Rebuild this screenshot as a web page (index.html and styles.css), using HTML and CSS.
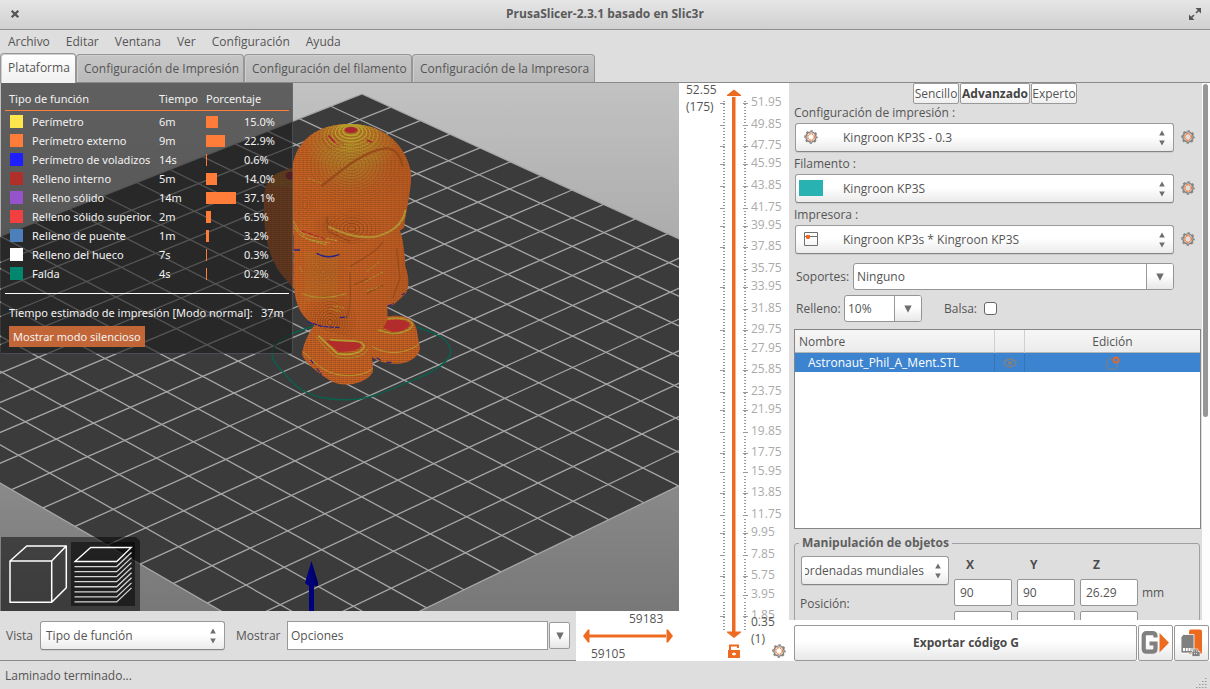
FILE: index.html
```
<!DOCTYPE html>
<html lang="es">
<head>
<meta charset="utf-8">
<title>PrusaSlicer-2.3.1 basado en Slic3r</title>
<link rel="stylesheet" href="styles.css">
</head>
<body>
<svg class="defs" width="0" height="0">
  <defs>
    <symbol id="gear" viewBox="0 0 14 14">
      <circle cx="7" cy="7" r="5.1" fill="none" stroke="#808080" stroke-width="1.4"/>
      <circle cx="7" cy="7" r="6.1" fill="none" stroke="#808080" stroke-width="1.4" stroke-dasharray="2.4 2.39" stroke-dashoffset="1.2"/>
      <circle cx="7" cy="7" r="3.3" fill="none" stroke="#ed6b21" stroke-width="1.2" stroke-dasharray="1.9 .7"/>
    </symbol>
    <symbol id="updown" viewBox="0 0 6 16">
      <path d="M3 0.5L5.8 5.5H.2zM3 15.5L5.8 10.5H.2z" fill="#6e6e6e"/>
    </symbol>
    <symbol id="down" viewBox="0 0 8 8">
      <path d="M.3.5H7.7L4 7.7z" fill="#6e6e6e"/>
    </symbol>
  </defs>
</svg>
<div class="window">
  <header class="titlebar">
    <svg class="close" width="10" height="10" viewBox="0 0 10 10"><path d="M1.7 1.7L8.3 8.3M8.3 1.7L1.7 8.3" stroke="#555" stroke-width="2.3"/></svg>
    <span class="title">PrusaSlicer-2.3.1 basado en Slic3r</span>
    <svg class="max" width="12" height="12" viewBox="0 0 12 12"><path d="M6.5 0H12V5.5zM0 6.5V12H5.5z" fill="#555"/><path d="M2 10L5 7M7 5L10 2" stroke="#555" stroke-width="1.6"/></svg>
  </header>
  <nav class="menubar"><span>Archivo</span><span>Editar</span><span>Ventana</span><span>Ver</span><span>Configuración</span><span>Ayuda</span></nav>
  <div class="tabs">
    <div class="tab active">Plataforma</div>
    <div class="tab t2">Configuración de Impresión</div>
    <div class="tab t3">Configuración del filamento</div>
    <div class="tab t4">Configuración de la Impresora</div>
  </div>

  <main class="main">
    <section class="plater">
      <div class="view3d">
        <svg class="scene" width="679" height="528" viewBox="0 83 679 528">
          <defs>
            <linearGradient id="sky" x1="0" y1="0" x2="0" y2="1"><stop offset="0" stop-color="#c2c2c2"/><stop offset="1" stop-color="#787878"/></linearGradient>
            <pattern id="layers" width="12" height="6" patternUnits="userSpaceOnUse">
              <rect width="12" height="3" fill="#c96326"/><rect y="3" width="12" height="3" fill="#a3501f"/>
              <rect x="3" width="3" height="3" fill="#b95b22"/><rect x="6" y="3" width="3" height="3" fill="#b25822"/>
            </pattern>
            <linearGradient id="shade" x1="0" y1="0" x2="1" y2="0"><stop offset="0" stop-color="#c9621f" stop-opacity=".3"/><stop offset=".45" stop-color="#b85a20" stop-opacity=".1"/><stop offset="1" stop-color="#a5501c" stop-opacity=".45"/></linearGradient>
            <radialGradient id="crown" gradientUnits="userSpaceOnUse" cx="303" cy="190" r="135"><stop offset="0" stop-color="#a8a12c" stop-opacity=".5"/><stop offset=".6" stop-color="#a8902c" stop-opacity=".3"/><stop offset="1" stop-color="#a8802c" stop-opacity="0"/></radialGradient>
            <clipPath id="head"><path d="M128 240C142 165 200 116 305 116C410 120 470 185 484 268C482 330 468 375 462 428L430 450L300 480L128 450z"/></clipPath>
            <clipPath id="trunk"><path d="M131 400L300 420L447 430C458 455 464 500 466 545C478 580 478 600 468 625L430 660L412 664V705L360 750L331 770L200 725C160 700 136 670 132 600z"/></clipPath>
          </defs>
          <rect y="83" width="679" height="528" fill="url(#sky)"/>
          <g id="bed"></g>
          <g transform="translate(250 85) scale(.33333)">
            <path d="M195 722C130 742 66 764 66 806C66 832 90 850 120 884C165 936 230 944 290 944C370 944 420 912 480 889C545 864 603 830 602 797C600 762 550 742 500 726" fill="none" stroke="#0b5f4d" stroke-width="4.5"/>
            <path d="M128 248L90 260C60 272 44 300 42 335C40 430 48 500 88 560L132 612z" fill="url(#layers)"/>
            <path d="M128 250L80 268L60 300L128 310z" fill="#a8902c" opacity=".3"/>
            <ellipse cx="122" cy="272" rx="16" ry="12" fill="#9b2430"/>
            <!-- boots -->
            <path d="M330 735C345 705 400 692 440 692C480 694 496 710 500 735L510 790C508 812 480 838 440 836C410 836 380 828 365 815z" fill="url(#layers)"/>
            <path d="M400 728L412 706C450 700 484 708 478 722C462 740 440 742 425 740z" fill="#b22c2c"/>
            <path d="M385 735L425 746C450 746 484 738 488 718C480 700 440 696 412 702" fill="none" stroke="#a89a30" stroke-width="4"/>
            <path d="M368 785C410 812 470 806 506 778" fill="none" stroke="#b3982c" stroke-width="3"/>
            <path d="M195 718C175 745 158 780 156 808C162 830 200 865 250 892C290 908 350 895 368 862C372 820 358 775 335 755L300 740z" fill="url(#layers)"/>
            <path d="M228 768L250 765C290 770 322 764 334 778C332 796 300 802 265 800z" fill="#b22c2c"/>
            <path d="M240 764C300 772 330 760 343 782C338 806 300 812 262 806L205 752" fill="none" stroke="#b09d30" stroke-width="5"/>
            <path d="M198 755C222 780 235 806 262 816C300 824 345 816 354 790" fill="none" stroke="#a88d2c" stroke-width="3"/>
            <path d="M158 800C200 835 215 860 270 870C310 876 350 868 368 850" fill="none" stroke="#b3982c" stroke-width="3"/>
            <!-- trunk -->
            <g clip-path="url(#trunk)">
              <rect x="120" y="390" width="370" height="390" fill="url(#layers)"/>
              <rect x="120" y="390" width="370" height="390" fill="url(#shade)"/>
              <rect x="165" y="500" width="100" height="150" fill="#a8902c" opacity=".15"/>
              <g id="trunkRings"></g>
              <path d="M300 560C300 620 306 660 290 700M440 490L450 580L428 640M300 545C340 520 380 500 400 470M350 625L400 600M310 600L355 580" fill="none" stroke="#8d4719" stroke-width="4" opacity=".7"/>
              <path d="M148 545L158 562M350 560L390 530M345 590L400 560M350 618L390 605" stroke="#a88c2c" stroke-width="3" fill="none" stroke-dasharray="9 4"/>
              <path d="M155 625C200 645 250 638 290 625" stroke="#a9952c" stroke-width="3" fill="none"/>
              <path d="M250 662L285 670M240 672L270 680" stroke="#a9952c" stroke-width="3" fill="none" stroke-dasharray="6 3"/>
              <path d="M200 505C225 520 250 516 268 508M132 495H150" stroke="#26208a" stroke-width="4" fill="none"/>
            </g>
            <path d="M172 710L215 724L270 728M270 698L290 696M412 664L432 656M455 630L465 625M182 824L190 836M200 850L214 868M380 818L392 826M410 832L425 832" stroke="#28228a" stroke-width="3.5" fill="none" stroke-dasharray="14 3"/>
            <!-- helmet -->
            <g clip-path="url(#head)">
              <rect x="120" y="110" width="370" height="370" fill="url(#layers)"/>
              <rect x="120" y="110" width="370" height="370" fill="url(#shade)"/>
              <rect x="120" y="110" width="370" height="370" fill="url(#crown)"/>
              <g id="headRings"></g>
            </g>
            <path d="M214 303C265 265 335 200 405 190C440 188 452 215 458 245" fill="none" stroke="#984b1a" stroke-width="7"/>
            <path d="M175 280L215 295" fill="none" stroke="#a88c2c" stroke-width="3" stroke-dasharray="9 3"/>
            <path d="M235 425C280 445 320 462 375 455C420 445 460 420 466 375" fill="none" stroke="#a89a35" stroke-width="6"/>
            <path d="M235 425C280 445 320 462 375 455C420 445 460 420 466 375" fill="none" stroke="#c77a2b" stroke-width="2"/>
            <path d="M130 408L145 435C185 465 220 455 262 468M132 425L150 450C180 470 210 468 240 474M150 438L170 462L230 480" fill="none" stroke="#aca035" stroke-width="3" stroke-dasharray="9 3"/>
            <path d="M155 438L225 462" stroke="#b22c2c" stroke-width="4" stroke-dasharray="16 4"/>
            <path d="M232 395V435M235 440L300 470" stroke="#934819" stroke-width="4" fill="none"/>
          </g>
          <path d="M311.5 561L305 583C308 587 315 587 318 583z" fill="#00007c"/>
          <path d="M311.500 563L315 586H318L318 583z" fill="#00005e"/>
          <rect x="309" y="585" width="5" height="26" fill="#00007c"/>
        </svg>

        <div class="legend">
          <div class="lrow lhead"><span class="c1">Tipo de función</span><span class="c2">Tiempo</span><span class="c3">Porcentaje</span></div>
          <div class="lrow"><i class="sw yellow"></i><span class="name">Perímetro</span><span class="time">6m</span><span class="barbox"><i class="bar" style="width:12px"></i></span><span>15.0%</span></div>
          <div class="lrow"><i class="sw orange"></i><span class="name">Perímetro externo</span><span class="time">9m</span><span class="barbox"><i class="bar" style="width:19px"></i></span><span>22.9%</span></div>
          <div class="lrow"><i class="sw blue"></i><span class="name">Perímetro de voladizos</span><span class="time">14s</span><span class="barbox"><i class="bar" style="width:1px"></i></span><span>0.6%</span></div>
          <div class="lrow"><i class="sw brick"></i><span class="name">Relleno interno</span><span class="time">5m</span><span class="barbox"><i class="bar" style="width:11px"></i></span><span>14.0%</span></div>
          <div class="lrow"><i class="sw purple"></i><span class="name">Relleno sólido</span><span class="time">14m</span><span class="barbox"><i class="bar" style="width:30px"></i></span><span>37.1%</span></div>
          <div class="lrow"><i class="sw red"></i><span class="name">Relleno sólido superior</span><span class="time">2m</span><span class="barbox"><i class="bar" style="width:5px"></i></span><span>6.5%</span></div>
          <div class="lrow"><i class="sw steel"></i><span class="name">Relleno de puente</span><span class="time">1m</span><span class="barbox"><i class="bar" style="width:3px"></i></span><span>3.2%</span></div>
          <div class="lrow"><i class="sw white"></i><span class="name">Relleno del hueco</span><span class="time">7s</span><span class="barbox"><i class="bar" style="width:1px"></i></span><span>0.3%</span></div>
          <div class="lrow"><i class="sw green"></i><span class="name">Falda</span><span class="time">4s</span><span class="barbox"><i class="bar" style="width:1px"></i></span><span>0.2%</span></div>
          <div class="total"><span class="est">Tiempo estimado de impresión [Modo normal]:</span><span>37m</span></div>
          <div class="silent">Mostrar modo silencioso</div>
        </div>

        <svg class="viewicons" width="139" height="74" viewBox="1 537 139 74">
          <path d="M1 537H136L140 541V611H1z" fill="#000" fill-opacity=".5"/>
          <rect x="71" y="542" width="64" height="64" fill="#000" fill-opacity=".48"/>
          <path d="M10 561H51.700V602.300H10zM10 561L26.700 546H66.300L51.700 561M66.300 546V587.700L51.700 602.300" fill="none" stroke="#fff" stroke-width="1.500" stroke-linejoin="round"/>
          <path d="M75 561.500L90.700 547.500H131.300L116.700 561.500z" fill="none" stroke="#fff" stroke-width="1.300"/>
          <g id="stack" fill="none" stroke="#d4d4d4" stroke-width="1.300"></g>
        </svg>
      </div>

      <div class="viewbar">
        <span class="vlabel">Vista</span>
        <div class="choice vchoice"><span>Tipo de función</span><svg width="6" height="16"><use href="#updown"/></svg></div>
        <span class="mlabel">Mostrar</span>
        <div class="entry">Opciones</div>
        <div class="dropbtn"><svg width="8" height="8"><use href="#down"/></svg></div>
      </div>

      <div class="hslider">
        <span class="hi">59183</span>
        <svg width="90" height="14" viewBox="0 0 90 14"><rect x="6" y="5.500" width="77" height="3" fill="#ed6b21"/><path d="M0 7L5 0.500H6.500V13.500H5zM90 7L85 .5H83.500V13.500H85z" fill="#ed6b21"/></svg>
        <span class="lo">59105</span>
      </div>

      <div class="vslider">
        <svg width="110" height="578" viewBox="679 83 110 578">
          <g id="ticks" fill="#999"></g>
          <g id="tickLabels" class="ticklabels"></g>
          <rect x="732" y="97" width="3" height="536" fill="#ed6b21"/><rect x="735" y="97" width="1" height="536" fill="#f8b48e"/>
          <path d="M727 96V95L734 89.500L741 95V96zM727 631.500V632.500L734 638L741 632.500V631.500z" fill="#ed6b21"/>
          <g class="curlabels"><text x="686" y="94">52.55</text><text x="686" y="111">(175)</text><text x="751" y="626">0.35</text><text x="751" y="643">(1)</text></g>
          <path d="M730 650.500V645.500H738V648" fill="none" stroke="#ed6b21" stroke-width="2"/>
          <rect x="728" y="650" width="12" height="8" fill="#ed6b21"/><path d="M732 654H736M734 652.500V655.500" stroke="#fff" stroke-width="1.300"/>
          <use href="#gear" x="772" y="644" width="14" height="14"/>
        </svg>
      </div>
    </section>

    <aside class="side">
      <div class="scrollarea">
        <div class="content">
          <div class="modes"><span>Sencillo</span><span class="on">Advanzado</span><span>Experto</span></div>
          <div class="plabel">Configuración de impresión :</div>
          <div class="prow"><div class="choice"><svg class="pic" width="14" height="14"><use href="#gear"/></svg><span class="val">Kingroon KP3S - 0.3</span><svg width="6" height="16"><use href="#updown"/></svg></div><svg class="edit" width="14" height="14"><use href="#gear"/></svg></div>
          <div class="plabel">Filamento :</div>
          <div class="prow"><div class="choice"><i class="filament"></i><span class="val">Kingroon KP3S</span><svg width="6" height="16"><use href="#updown"/></svg></div><svg class="edit" width="14" height="14"><use href="#gear"/></svg></div>
          <div class="plabel">Impresora :</div>
          <div class="prow"><div class="choice"><svg class="pic" width="14" height="14" viewBox="0 0 14 14"><path d="M.5.5H13.500V13.500H.5zM0 4.500H14" fill="none" stroke="#707070"/><path d="M2 3H6V6L5 7H3L2 6z" fill="#ed6b21"/></svg><span class="val">Kingroon KP3s * Kingroon KP3S</span><svg width="6" height="16"><use href="#updown"/></svg></div><svg class="edit" width="14" height="14"><use href="#gear"/></svg></div>
          <div class="frow r1"><span class="flabel">Soportes:</span><div class="combo c1w"><span>Ninguno</span><b><svg width="8" height="8"><use href="#down"/></svg></b></div></div>
          <div class="frow r2"><span class="flabel">Relleno:</span><div class="combo c2w"><span>10%</span><b><svg width="8" height="8"><use href="#down"/></svg></b></div><span class="balsa">Balsa:</span><i class="check"></i></div>
          <div class="list">
            <div class="lh"><span>Nombre</span><span></span><span class="ctr">Edición</span></div>
            <div class="li"><span>Astronaut_Phil_A_Ment.STL</span>
              <span class="ctr"><svg width="14" height="10" viewBox="0 0 14 10"><path d="M.8 5C3.500 0 10.500 0 13.200 5C10.500 10 3.500 10 .8 5z" fill="none" stroke="#84827c" stroke-width="1.500"/><circle cx="7" cy="5" r="2.100" fill="#84827c"/></svg></span>
              <span class="ctr"><svg width="14" height="14" viewBox="0 0 14 14"><path d="M6 3H2.500Q1 3 1 4.500V11.500Q1 13 2.500 13H9.500Q11 13 11 11.500V8" fill="none" stroke="#7d8084" stroke-width="1.200"/><circle cx="10" cy="4" r="2.500" fill="none" stroke="#dc6a34" stroke-width="2"/></svg></span></div>
          </div>
          <div class="group">
            <span class="gtitle">Manipulación de objetos</span>
            <div class="gl"><div class="choice world"><span class="clip"><span>Coordenadas mundiales</span></span><svg width="6" height="16"><use href="#updown"/></svg></div><span class="pos">Posición:</span></div>
            <div class="gr"><b>X</b><b>Y</b><b>Z</b><i></i><div class="num">90</div><div class="num">90</div><div class="num">26.29</div><span class="mm">mm</span><div class="num"></div><div class="num"></div><div class="num"></div></div>
          </div>
        </div>
        <div class="scroll"><i></i></div>
      </div>
      <div class="actions">
        <div class="btn export">Exportar código G</div>
        <div class="btn gsend"><svg width="28" height="26" viewBox="0 0 28 26"><path d="M14.500 7.500V6Q14.500 3.200 11.500 3.200H5.500Q2.700 3.200 2.700 6V18.500Q2.700 21.700 5.500 21.700H11.500Q14.500 21.700 14.500 18.500V13.500H8.500" fill="none" stroke="#808080" stroke-width="4.200"/><path d="M18.500 3L28 12.700L18.500 22.500z" fill="#ed6b21"/></svg></div>
        <div class="btn"><svg width="22" height="28" viewBox="0 0 22 28"><path d="M8 2.500Q8 .5 10 .5H19Q21 .5 21 2.500V23Q21 25 19 25H8z" fill="#ed6b21"/><path d="M2.500 5.500H13V24H0V8z" fill="#808080" stroke="#fff" stroke-width=".8"/><path d="M2 20.500H11.500" stroke="#fff" stroke-width="3" stroke-dasharray="2 .8"/><path d="M12 20H17V22.500H19V27.500H11V22.500H12z" fill="#808080" stroke="#fff" stroke-width=".6"/><path d="M13 24.500H17M13 22H16" stroke="#eee" stroke-dasharray="1 1"/></svg></div>
      </div>
    </aside>
  </main>
  <footer class="status"><span>Laminado terminado...</span><svg width="12" height="12" viewBox="0 0 12 12"><path d="M10 1.500H12M7 4.500H12M4 7.500H12M1 10.500H12" stroke="#999" stroke-dasharray="1.500 1.500"/></svg></footer>
</div>
<script src="scene.js"></script>
</body>
</html>
```
FILE: styles.css
```
* { box-sizing: border-box; }
body { margin: 0; background: #dedede; font-family: "Open Sans", "Noto Sans", sans-serif; font-size: 12px; color: #555; overflow: hidden; }
svg { display: block; flex: none; }
.defs { position: absolute; }
i, b { font-style: normal; }
span, .tab, .plabel, .silent, .entry { white-space: nowrap; }
.window { width: 1210px; height: 689px; display: flex; flex-direction: column; }

.titlebar { height: 30px; flex: none; background: linear-gradient(#e6e6e6, #d0d0d0); border-bottom: 1px solid #8f8f8f; display: flex; align-items: center; justify-content: space-between; padding: 0 9px 2px 10px; }
.title { font-weight: bold; color: #5a5a5a; padding-left: 1px; }
.menubar { height: 24px; flex: none; display: flex; gap: 16px; padding: 0 8px; line-height: 23px; }
.tabs { height: 29px; flex: none; display: flex; align-items: flex-end; border-bottom: 1px solid #8a8a8a; }
.tab { height: 28px; border: 1px solid #969696; border-bottom: 0; border-radius: 4px 4px 0 0; background: linear-gradient(#c6c6c6, #b9b9b9); box-shadow: inset 1px 1px #cfcfcf; line-height: 27px; padding-left: 7px; }
.tab.active { width: 76px; height: 30px; margin-bottom: -1px; background: linear-gradient(#fff, #f0f0f0); line-height: 27px; padding-left: 7px; }
.t2 { width: 168px; }
.t3 { width: 168px; }
.t4 { width: 183px; }

.main { height: 578px; flex: none; display: flex; border-bottom: 1px solid #8a8a8a; }
.plater { width: 789px; flex: none; display: grid; grid-template-columns: 576px 103px 110px; grid-template-rows: 528px 50px; height: 578px; }
.view3d { grid-column: 1 / 3; position: relative; border-left: 1px solid #77777a; }
.scene { margin-left: -1px; }
.viewicons { position: absolute; left: 0; bottom: 0; }

.legend { position: absolute; left: 0; top: 0; width: 292px; height: 271px; padding: 6px 3px 0 4px; background: rgba(28, 28, 28, .59); border: 1px solid rgba(110, 110, 128, .5); border-width: 0 1px 1px 0; color: #f2f2f2; font-family: "Noto Sans", sans-serif; font-size: 11px; }
.lrow { height: 19px; display: flex; align-items: center; padding-left: 5px; }
.lhead { height: 22px; margin-bottom: 1px; border-bottom: 1px solid #ff7d38; padding-left: 4px; padding-bottom: 2px; }
.lhead .c1 { width: 150px; }
.lhead .c2 { width: 47px; }
.sw { width: 13px; height: 13px; margin-right: 9px; }
.yellow { background: #ffe64d; }
.orange { background: #ff7d38; }
.blue { background: #1e1eff; }
.brick { background: #b03029; }
.purple { background: #9654cc; }
.red { background: #f24040; }
.steel { background: #4d80ba; }
.white { background: #fff; }
.green { background: #00876e; }
.name { width: 127px; }
.time { width: 47px; }
.barbox { width: 38px; }
.bar { display: block; height: 12px; background: #ff7d38; }
.total { margin-top: 10px; height: 28px; display: flex; align-items: center; border-top: 1px solid #fff; padding: 9px 0 0 4px; }
.est { width: 252px; }
.silent { width: 136px; height: 21px; margin: 5px 0 0 4px; background: #c36637; line-height: 21px; padding-left: 4px; }

.choice { display: flex; align-items: center; justify-content: space-between; border: 1px solid #9a9a9a; border-bottom-color: #858585; border-radius: 3px; background: linear-gradient(#fff 45%, #ebebeb); height: 29px; box-shadow: 0 1px #cbcbcb; }
.viewbar { display: flex; align-items: flex-start; padding: 10px 0 0 6px; line-height: 29px; }
.vlabel { width: 34px; }
.vchoice { width: 185px; padding: 0 8px 0 5px; margin-right: 11px; }
.mlabel { width: 51px; }
.entry { width: 261px; height: 29px; border: 1px solid #999; background: #fff; padding-left: 3px; line-height: 27px; }
.dropbtn { width: 21px; height: 27px; margin: 1px 0 0 1px; border: 1px solid #9a9a9a; border-radius: 2px; background: linear-gradient(#fff 45%, #e6e6e6); display: flex; align-items: center; justify-content: center; }
.hslider { background: #fff; padding-left: 7px; display: flex; flex-direction: column; }
.hslider .hi { margin-left: 46px; height: 18px; line-height: 15px; }
.hslider .lo { margin-left: 8px; line-height: 22px; height: 17px; }
.vslider { grid-column: 3; grid-row: 1 / 3; background: #fff; }
.ticklabels text { fill: #aaa; }
.curlabels text { fill: #555; }
.vslider text { font-size: 12px; }

.side { width: 421px; display: flex; flex-direction: column; }
.scrollarea { height: 537px; flex: none; display: flex; overflow: hidden; }
.content { width: 412px; padding: 0 0 0 5px; }
.scroll { width: 9px; background: #fdfdfd; border-left: 1px solid #ddd; }
.scroll i { display: block; width: 5px; height: 333px; margin: 1px 0 0 1px; border-radius: 3px; background: #969696; }
.modes { display: flex; margin-left: 119px; height: 20px; gap: 1px; }
.modes span { width: 46px; height: 21px; border: 1px solid #999; border-radius: 2px; background: linear-gradient(#fff 45%, #eee); line-height: 20px; display: flex; justify-content: center; }
.modes .on { width: 70px; font-weight: bold; color: #444; }
.plabel { height: 20px; line-height: 19px; }
.plabel ~ .plabel { height: 22px; line-height: 23px; }
.prow { display: flex; align-items: center; height: 29px; padding-left: 1px; gap: 7px; }
.edit { margin-bottom: 1px; }
.prow .choice { width: 379px; padding: 0 8px 0 8px; }
.pic { margin: 0 25px 1px 0; }
.filament { width: 24px; height: 16px; background: #29b2b2; margin: 0 20px 1px -5px; }
.val { flex: 1; }
.frow { display: flex; align-items: center; height: 27px; padding-left: 2px; }
.r1 { margin-top: 9px; }
.r2 { margin-top: 5px; }
.c1w { width: 321px; margin-left: auto; margin-right: 27px; }
.combo { height: 27px; display: flex; border: 1px solid #959595; border-radius: 3px; background: #fff; line-height: 25px; overflow: hidden; }
.combo span { flex: 1; padding-left: 3px; }
.combo b { width: 27px; border-left: 1px solid #999; background: linear-gradient(#fff 45%, #e8e8e8); display: flex; align-items: center; justify-content: center; }
.r2 .flabel { width: 48px; }
.c2w { width: 78px; margin-right: 22px; }
.balsa { width: 40px; }
.check { width: 13px; height: 13px; border: 1px solid #666; border-radius: 3px; background: #fff; }
.list { width: 407px; height: 200px; margin-top: 7px; border: 1px solid #858585; background: #fff; }
.lh, .li { display: grid; grid-template-columns: 199px 30px 1fr; }
.lh { height: 23px; line-height: 23px; background: linear-gradient(#f6f6f6, #ececec); border-bottom: 1px solid #b5b5b5; }
.lh span + span, .li span + span { border-left: 1px solid #d0d0d0; }
.lh span:first-child { padding-left: 4px; }
.li { height: 19px; line-height: 19px; background: #3c84cf; color: #fff; }
.li span:first-child { padding-left: 13px; }
.li span + span { border-color: #3674b8; }
.ctr { display: flex; align-items: center; justify-content: center; }
.group { margin-top: 14px; width: 406px; height: 120px; border: 1px solid #a0a0a0; border-radius: 3px; display: flex; position: relative; }
.gtitle { position: absolute; left: 4px; top: -10px; padding: 0 3px; background: #dedede; font-weight: bold; line-height: 18px; color: #606060; }
.gl { width: 159px; padding: 12px 0 0 6px; }
.world { width: 148px; padding: 0 7px 0 3px; }
.clip { width: 119px; margin-right: 1px; overflow: hidden; display: flex; justify-content: flex-end; }
.pos { display: block; margin: 10px 0 0 -1px; }
.gr { display: grid; grid-template-columns: 58px 58px 58px 40px; grid-template-rows: 27px 27px 27px; column-gap: 5px; row-gap: 5px; padding-top: 3px; }
.gr b { color: #4c4c4c; padding-left: 12px; align-self: center; padding-top: 7px; }
.gr b + b { padding-left: 13px; }
.num { border: 1px solid #959595; border-radius: 2px; background: #fff; height: 27px; line-height: 25px; padding-left: 5px; }
.mm { line-height: 27px; margin-left: -1px; }
.actions { height: 41px; padding: 5px 1px 0 5px; background: #fff; display: flex; gap: 1px; }
.btn { width: 35px; height: 36px; border: 1px solid #999; border-radius: 2px; background: linear-gradient(#fff 45%, #e8e8e8); display: flex; align-items: center; justify-content: center; }
.export { width: 343px; font-weight: bold; color: #4a4a4a; padding: 0 0 2px 1px; }
.gsend { padding-right: 2px; }
.status { flex: 1; display: flex; justify-content: space-between; padding: 0 3px 0 5px; line-height: 28px; align-items: flex-end; }
.status span { height: 27px; }
```
FILE: scene.js
```
const NS = 'http://www.w3.org/2000/svg';
function add(parent, tag, attrs, text) {
  const el = document.createElementNS(NS, tag);
  for (const k in attrs) el.setAttribute(k, attrs[k]);
  if (text) el.textContent = text;
  document.getElementById(parent).appendChild(el);
}

// Perspective mapping of the 180 x 180 mm bed onto the view.
const B = [311.7, 663.5], R = [941.3, 358.7], T = [362, 94], L = [-253.8, 336];
const sx = B[0] - R[0] + T[0] - L[0], sy = B[1] - R[1] + T[1] - L[1];
const dx1 = R[0] - T[0], dy1 = R[1] - T[1], dx2 = L[0] - T[0], dy2 = L[1] - T[1];
const det = dx1 * dy2 - dx2 * dy1;
const g = (sx * dy2 - dx2 * sy) / det, h = (dx1 * sy - sx * dy1) / det;
function project(u, v) {
  const w = g * u + h * v + 1;
  return [
    ((R[0] - B[0] + g * R[0]) * u + (L[0] - B[0] + h * L[0]) * v + B[0]) / w,
    ((R[1] - B[1] + g * R[1]) * u + (L[1] - B[1] + h * L[1]) * v + B[1]) / w
  ];
}
add('bed', 'polygon', { points: [B, R, T, L].map(p => p.join()).join(' '), fill: '#3b3b3b' });
for (let i = 0; i <= 18; i++) {
  const t = i / 18;
  for (const [p, q] of [[project(t, 0), project(t, 1)], [project(0, t), project(1, t)]])
    add('bed', 'line', { x1: p[0], y1: p[1], x2: q[0], y2: q[1], stroke: '#a6a6a6', 'stroke-width': 1.3 });
}

// Contour rings of the sliced model.
function rings(parent, cx, cy, rx, ry, n, color, opacity, dash) {
  for (let i = 1; i <= n; i++)
    add(parent, 'ellipse', { cx, cy, rx: rx * i / n, ry: ry * i / n, fill: 'none', stroke: color, 'stroke-width': 3, opacity: opacity * (1.15 - i / n), 'stroke-dasharray': dash || 'none' });
}
rings('headRings', 303, 240, 165, 130, 15, '#7a4a1c', .7, '6 2');
rings('headRings', 303, 240, 158, 124, 15, '#b09030', .45, '3 6');
rings('headRings', 305, 432, 85, 60, 7, '#7d3f16', .75);
rings('headRings', 230, 420, 40, 40, 5, '#7d3f16', .5);
rings('headRings', 165, 360, 40, 60, 5, '#8d4719', .5);
for (let i = 1; i < 12; i++)
  add('headRings', 'ellipse', { cx: 303, cy: 134 + i * 2.9, rx: 14 + i * 11, ry: 8 + i * 6.5, fill: 'none', stroke: i < 7 ? '#b5aa2e' : '#a9902a', 'stroke-width': 4, opacity: 1.05 - i * .07, 'stroke-dasharray': i < 4 ? 'none' : '5 2' });
for (let i = 4; i < 8; i++)
  add('headRings', 'path', { d: `M${300 - i * 12} ${140 + i * 3}q12 ${14 + i * 2} 30 ${18 + i * 2}`, fill: 'none', stroke: '#a83a30', 'stroke-width': 2.5, opacity: .7 });
add('headRings', 'ellipse', { cx: 303, cy: 135, rx: 19, ry: 9, fill: '#ab2431' });
add('headRings', 'path', { d: 'M235 152L255 172M350 165L365 172', stroke: '#ab2431', 'stroke-width': 5 });
rings('trunkRings', 240, 712, 75, 90, 10, '#7d3f16', .8);
rings('trunkRings', 220, 560, 70, 70, 8, '#7d4f1a', .5, '6 2');

// Layered-cube icon.
for (let i = 1; i <= 8; i++) {
  const y = 561.5 + i * 5.05;
  add('stack', 'path', { d: `M74.500 ${y}H116.700L131.500 ${y - 14}` });
}

// Ruler of the layer slider.
const yOf = z => 103.5 + (51.95 - z) * 10.246;
for (let y = 100.5, i = 0; y < 632; i++, y += 3.074)
  for (const x of [723, 744]) add('ticks', 'rect', { x, y: Math.round(y), width: 2, height: 1 });
[51.95, 49.85, 47.75, 45.95, 43.85, 41.75, 39.95, 37.85, 35.75, 33.95, 31.85, 29.75, 27.95, 25.85, 23.75, 21.95, 19.85, 17.75, 15.95, 13.85, 11.75, 9.95, 7.85, 5.75, 3.95, 1.85].forEach(z => {
  const y = Math.floor(yOf(z));
  add('ticks', 'rect', { x: 720, y, width: 5, height: 1 });
  add('ticks', 'rect', { x: 743, y, width: 5, height: 1 });
  add('tickLabels', 'text', { x: 751, y: y + 3 }, z.toFixed(2));
});
```
